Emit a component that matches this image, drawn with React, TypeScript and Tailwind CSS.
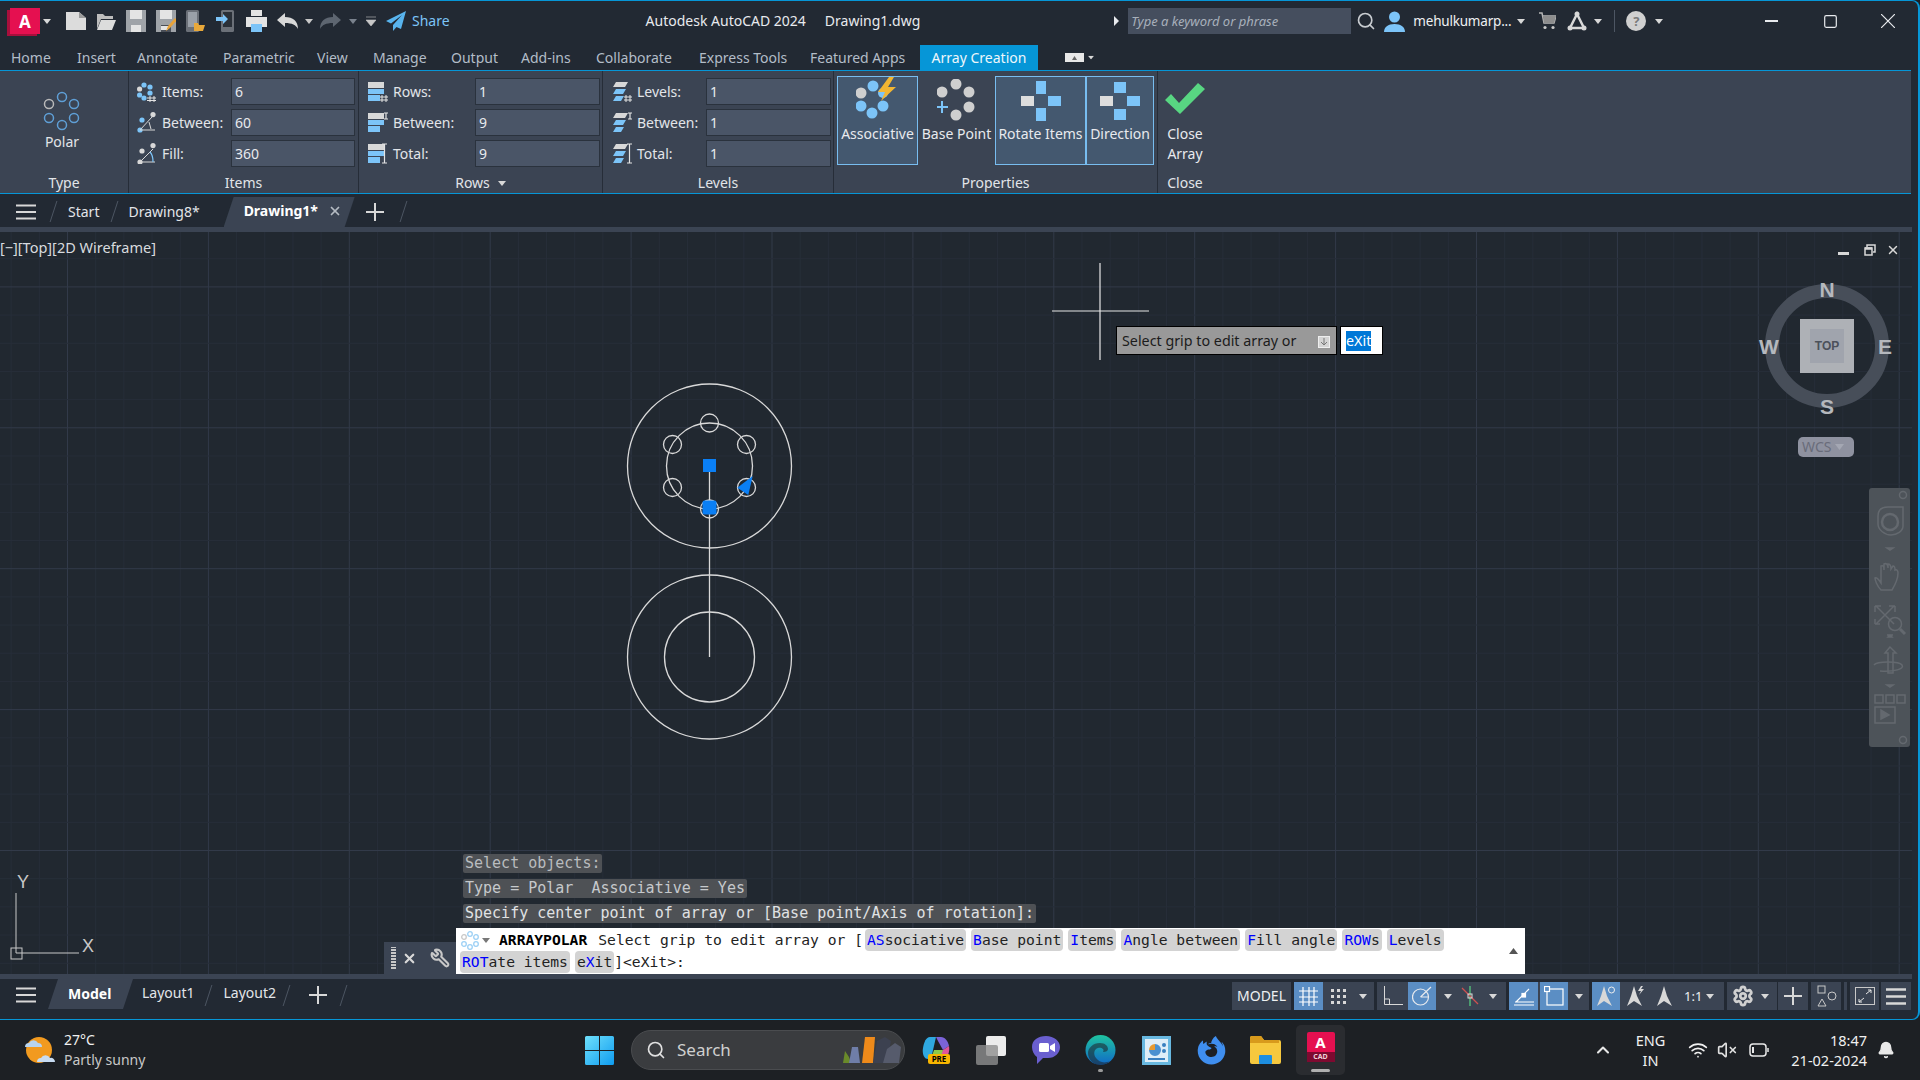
import React from "react";
import { Bell, ChevronUp, Search, Settings, VolumeX, Wifi, Wrench, X } from "lucide-react";
import { FaFirefoxBrowser } from "react-icons/fa";

// ---- small helpers ----

const Caret = ({ className = "" }: { className?: string }) => (
  <svg width="8" height="5" viewBox="0 0 8 5" className={className}>
    <path d="M0 0h8L4 5z" fill="currentColor" />
  </svg>
);

const Slash = ({ className = "" }: { className?: string }) => (
  <div className={`w-px h-[21px] bg-[#4d5663] skew-x-[-18deg] ${className}`} />
);

const Burger = () => (
  <svg width="20" height="16" viewBox="0 0 20 16" className="text-[#d8d8d8]">
    <path d="M0 1.500h20M0 8h20M0 14.500h20" stroke="currentColor" strokeWidth="2" />
  </svg>
);

const PlusIcon = ({ size = 18 }: { size?: number }) => (
  <svg width={size} height={size} viewBox="0 0 18 18">
    <path d="M9 0v18M0 9h18" stroke="#d8d8d8" strokeWidth="2" />
  </svg>
);

const BLUE = "#7cc4f8";
const GREY = "#d8d8d8";

// ---- quick access toolbar icons ----

const AppLogo = () => (
  <div className="relative w-[30px] h-[26px] bg-[#e51050] shadow-[-3px_2px_0_#a80f3c] flex items-center justify-center">
    <span className="text-white text-[17px] font-bold leading-none">A</span>
  </div>
);

const QatNew = () => (
  <svg width="20" height="20" viewBox="0 0 20 20"><path d="M0 1h13l7 6v12H0z" fill="#dcdcdc" /><path d="M13 1v6h7z" fill="#9a9a9a" /></svg>
);
const QatOpen = () => (
  <svg width="20" height="20" viewBox="0 0 20 20"><path d="M1 3h6l2 2h8v3H5L1 18z" fill="#bdbdbd" /><path d="M5 9h15l-4 10H1z" fill="#dcdcdc" /></svg>
);
const QatSave = ({ pen = false }: { pen?: boolean }) => (
  <svg width="20" height="24" viewBox="0 0 20 24">
    <path d="M0 1h20v22H0z" fill="#9fa3a8" />
    <path d="M4 1h12v9H4z" fill="#e4e4e4" />
    <path d="M5 16h10v7H5z" fill={pen ? "#4a4f58" : "#e4e4e4"} />
    {pen && <path d="M5 17h7v4H5z" fill="#e4e4e4" />}
    {pen && <path d="M10 22l2-5 7-8 2 2-7 8z" fill="#e8a33a" />}
  </svg>
);
const QatPhone = ({ arrow = false }: { arrow?: boolean }) => (
  <svg width="20" height="24" viewBox="0 0 20 24">
    <rect x={arrow ? 5 : 0} y="1" width="13" height="22" rx="1.500" fill="#6b7078" />
    <rect x={arrow ? 7 : 2} y="3" width="9" height="15" fill={arrow ? "#2a3038" : "#9aa0a8"} />
    {arrow ? <path d="M0 8h7V5l5 5-5 5v-3H0z" fill={BLUE} /> : <path d="M8 14h4l1 2h6l-2 6H8z" fill="#e8a83a" />}
  </svg>
);
const QatPrint = () => (
  <svg width="21" height="24" viewBox="0 0 21 24">
    <path d="M5 1h11v6H5z" fill="#e4e4e4" />
    <path d="M0 8h21v10H0z" fill="#e4e4e4" />
    <path d="M5 15h11v8H5z" fill="#7cc4f8" />
  </svg>
);
const QatUndo = ({ flip = false }: { flip?: boolean }) => (
  <svg width="21" height="16" viewBox="0 0 21 16" className={flip ? "-scale-x-100" : ""}>
    <path d="M0 7l8-7v4c8 0 13 4 13 12-2-4-6-6-13-6v4z" fill={flip ? "#5d6570" : "#d8d8d8"} />
  </svg>
);
const Plane = () => (
  <svg width="20" height="20" viewBox="0 0 20 20"><path d="M20 0L0 10l5 2.500L16 4 7 14v6l3.500-4 4.500 2z" fill="#58b4ee" /></svg>
);

// ---- ribbon icons ----

const ItemsIcon = () => (
  <svg width="20" height="20" viewBox="0 0 20 20">
    <circle cx="7" cy="3" r="2.600" fill={BLUE} /><circle cx="13" cy="5" r="2.600" fill={BLUE} /><circle cx="2.600" cy="7" r="2.600" fill={GREY} />
    <circle cx="2.600" cy="13" r="2.600" fill={BLUE} /><circle cx="7" cy="16" r="2.600" fill={BLUE} /><circle cx="13" cy="11" r="2.600" fill={BLUE} />
    <path d="M13 14v6M17 14v6M10 16h9M10 18.500h9" stroke="#e4e4e4" strokeWidth="1" />
  </svg>
);
const BetweenIcon = () => (
  <svg width="20" height="21" viewBox="0 0 20 21">
    <circle cx="3" cy="18" r="2.600" fill={BLUE} /><circle cx="16" cy="2.600" r="2.600" fill={GREY} /><circle cx="5" cy="8" r="2.600" fill={BLUE} />
    <path d="M3 18h15M3 18L15 5M12 10l2 7" stroke="#d8d8d8" strokeWidth="1" fill="none" />
  </svg>
);
const FillIcon = () => (
  <svg width="20" height="21" viewBox="0 0 20 21">
    <circle cx="3" cy="19" r="2.600" fill={GREY} /><circle cx="16" cy="2.600" r="2.600" fill={GREY} /><circle cx="5" cy="8" r="2.600" fill={GREY} />
    <path d="M3 19h15M3 19L16 6" stroke="#d8d8d8" strokeWidth="1" />
    <path d="M13 9c3 3 3 6 3 10" stroke={BLUE} strokeWidth="1.200" fill="none" />
  </svg>
);
const RowsIcon = ({ kind }: { kind: "count" | "between" | "total" }) => (
  <svg width="20" height="21" viewBox="0 0 20 21">
    <path d="M0 1h16v6H0z" fill={GREY} />
    <path d="M0 8h16v5H0z" fill={BLUE} />
    <path d="M0 14h12v6H0z" fill={BLUE} />
    {kind === "count" && <path d="M14 14v7M18 14v7M12 16h8M12 19h8" stroke="#e4e4e4" strokeWidth="1" />}
    {kind === "between" && <path d="M16 1h4M16 7h4M18 1v6" stroke="#e4e4e4" strokeWidth="1.200" />}
    {kind === "total" && <path d="M14 1h5M14 20h5M16.500 1v19" stroke="#e4e4e4" strokeWidth="1.200" />}
  </svg>
);
const LevelsIcon = ({ kind }: { kind: "count" | "between" | "total" }) => (
  <svg width="20" height="21" viewBox="0 0 20 21">
    <path d="M4 1h12l-3 5H1z" fill={GREY} />
    <path d="M4 8h10l-3 5H1z" fill={BLUE} />
    <path d="M4 15h8l-3 5H1z" fill={BLUE} />
    {kind === "count" && <path d="M14 14v7M18 14v7M12 16h8M12 19h8" stroke="#e4e4e4" strokeWidth="1" />}
    {kind === "between" && <path d="M16 1h4M16 7h4M18 1v6" stroke="#e4e4e4" strokeWidth="1.200" />}
    {kind === "total" && <path d="M15 1h5M15 20h5M17.500 1v19" stroke="#e4e4e4" strokeWidth="1.200" />}
  </svg>
);

const PolarIcon = () => (
  <svg width="38" height="40" viewBox="0 0 38 40" fill="none" strokeWidth="1.500">
    <circle cx="19" cy="6" r="4.500" stroke="#5f9fd6" />
    <circle cx="31" cy="13" r="4.500" stroke="#5f9fd6" />
    <circle cx="31" cy="27" r="4.500" stroke="#5f9fd6" />
    <circle cx="19" cy="34" r="4.500" stroke="#5f9fd6" />
    <circle cx="6" cy="27" r="4.500" stroke="#5f9fd6" />
    <circle cx="6" cy="13" r="4.500" stroke="#b9b9b9" />
  </svg>
);

const AssociativeIcon = () => (
  <svg width="44" height="44" viewBox="0 0 44 44">
    <circle cx="5" cy="16" r="5.500" fill="#cfcfcf" /><circle cx="17" cy="9" r="5.500" fill={BLUE} />
    <circle cx="27" cy="16" r="5" fill={BLUE} /><circle cx="5" cy="29" r="5.500" fill={BLUE} />
    <circle cx="16" cy="36" r="5.500" fill={BLUE} /><circle cx="27" cy="29" r="5.500" fill={BLUE} />
    <path d="M33 0L22 15h7l-4 9 15-14h-8l6-10z" fill="#f2b632" />
  </svg>
);
const BasePointIcon = () => (
  <svg width="40" height="42" viewBox="0 0 40 42">
    <circle cx="19" cy="5" r="5.500" fill="#cfcfcf" /><circle cx="5" cy="13" r="5.500" fill="#cfcfcf" />
    <circle cx="32" cy="13" r="5.500" fill="#cfcfcf" /><circle cx="32" cy="28" r="5.500" fill="#cfcfcf" />
    <circle cx="19" cy="36" r="5.500" fill="#cfcfcf" />
    <path d="M5 22v12M-1 28h12" stroke={BLUE} strokeWidth="2" />
  </svg>
);
const CrossSquares = ({ rotate }: { rotate: boolean }) => (
  <svg width="40" height="40" viewBox="0 0 40 40">
    {rotate ? <path d="M15 0h10v13H15z" fill={BLUE} /> : <path d="M14 1h12v11H14z" fill={BLUE} />}
    {rotate ? <path d="M15 27h10v13H15z" fill={BLUE} /> : <path d="M14 28h12v11H14z" fill={BLUE} />}
    <path d="M0 15h13v10H0z" fill="#dddddd" />
    <path d="M27 15h13v10H27z" fill={BLUE} />
  </svg>
);

// ---- ribbon pieces ----

const ParamRow = ({ icon, label, value, labelWidth, inputWidth }: { icon: React.ReactNode; label: string; value: string; labelWidth: string; inputWidth: string }) => (
  <div className="flex items-center h-[27px]">
    <div className="w-[25px]">{icon}</div>
    <span className={`${labelWidth} text-[#e2e5e9] whitespace-nowrap`}>{label}</span>
    <div className={`${inputWidth} h-[27px] bg-[#4a5567] border border-[#2a323d] pl-[3px] flex items-center text-[#e8eaee]`}>{value}</div>
  </div>
);

const PanelTitle = ({ children }: { children: React.ReactNode }) => (
  <div className="h-[22px] pt-[2px] flex items-center justify-center gap-2 text-[#e2e5e9]">{children}</div>
);

const PropButton = ({ label, icon, active, width, iconClass = "" }: { label: string; icon: React.ReactNode; active?: boolean; width: string; iconClass?: string }) => (
  <div className={`${width} h-[89px] flex flex-col items-center border ${active ? "border-[#78bdf0] bg-[#44586f]" : "border-transparent"}`}>
    <div className={`h-[44px] flex items-end justify-center ${iconClass}`}>{icon}</div>
    <span className="mt-[3px] whitespace-nowrap text-[#e8eaee]">{label}</span>
  </div>
);

const Ribbon = () => (
  <div className="flex h-[124px] w-[1911px] bg-[#3b4453] border-y border-[#0696d7]">
    {/* Type */}
    <div className="w-[129px] flex flex-col border-r border-[#262d38]">
      <div className="flex-1 flex flex-col items-center pt-[20px] pr-[4px]">
        <PolarIcon />
        <span className="mt-[1px] text-[#e2e5e9]">Polar</span>
      </div>
      <PanelTitle>Type</PanelTitle>
    </div>
    {/* Items */}
    <div className="w-[230px] flex flex-col border-r border-[#262d38]">
      <div className="flex-1 flex flex-col gap-[4px] pt-[7px] pl-[8px]">
        <ParamRow icon={<ItemsIcon />} label="Items:" value="6" labelWidth="w-[69px]" inputWidth="w-[124px]" />
        <ParamRow icon={<BetweenIcon />} label="Between:" value="60" labelWidth="w-[69px]" inputWidth="w-[124px]" />
        <ParamRow icon={<FillIcon />} label="Fill:" value="360" labelWidth="w-[69px]" inputWidth="w-[124px]" />
      </div>
      <PanelTitle>Items</PanelTitle>
    </div>
    {/* Rows */}
    <div className="w-[244px] flex flex-col border-r border-[#262d38]">
      <div className="flex-1 flex flex-col gap-[4px] pt-[7px] pl-[9px]">
        <ParamRow icon={<RowsIcon kind="count" />} label="Rows:" value="1" labelWidth="w-[82px]" inputWidth="w-[125px]" />
        <ParamRow icon={<RowsIcon kind="between" />} label="Between:" value="9" labelWidth="w-[82px]" inputWidth="w-[125px]" />
        <ParamRow icon={<RowsIcon kind="total" />} label="Total:" value="9" labelWidth="w-[82px]" inputWidth="w-[125px]" />
      </div>
      <PanelTitle>Rows <Caret className="text-[#d8d8d8]" /></PanelTitle>
    </div>
    {/* Levels */}
    <div className="w-[231px] flex flex-col border-r border-[#262d38]">
      <div className="flex-1 flex flex-col gap-[4px] pt-[7px] pl-[9px]">
        <ParamRow icon={<LevelsIcon kind="count" />} label="Levels:" value="1" labelWidth="w-[69px]" inputWidth="w-[125px]" />
        <ParamRow icon={<LevelsIcon kind="between" />} label="Between:" value="1" labelWidth="w-[69px]" inputWidth="w-[125px]" />
        <ParamRow icon={<LevelsIcon kind="total" />} label="Total:" value="1" labelWidth="w-[69px]" inputWidth="w-[125px]" />
      </div>
      <PanelTitle>Levels</PanelTitle>
    </div>
    {/* Properties */}
    <div className="w-[324px] flex flex-col border-r border-[#262d38]">
      <div className="flex-1 flex pt-[5px] pl-[3px]">
        <PropButton label="Associative" icon={<AssociativeIcon />} active width="w-[81px]" />
        <PropButton label="Base Point" icon={<BasePointIcon />} width="w-[77px]" />
        <PropButton label="Rotate Items" icon={<CrossSquares rotate />} active width="w-[91px]" />
        <PropButton label="Direction" icon={<CrossSquares rotate={false} />} active width="w-[68px]" />
      </div>
      <PanelTitle>Properties</PanelTitle>
    </div>
    {/* Close */}
    <div className="w-[54px] flex flex-col">
      <div className="flex-1 flex flex-col items-center pt-[12px] leading-[20px] text-[#e8eaee]">
        <svg width="40" height="31" viewBox="0 0 40 31"><path d="M0 17l6-6 8 9L33 0l7 6-25 25z" fill="#58d682" /></svg>
        <span className="mt-[10px]">Close</span>
        <span>Array</span>
      </div>
      <PanelTitle>Close</PanelTitle>
    </div>
  </div>
);

// ---- title bar ----

const TitleBar = () => (
  <div className="h-[44px] flex items-center pb-[4px] pl-[10px] text-[#e8eaee]">
    <AppLogo />
    <Caret className="ml-[3px] text-[#d8d8d8]" />
    <div className="ml-[15px] flex items-center gap-[10px]">
      <QatNew /><QatOpen /><QatSave /><QatSave pen /><QatPhone /><QatPhone arrow /><QatPrint /><QatUndo />
    </div>
    <Caret className="ml-[7px] text-[#c8c8c8]" />
    <div className="ml-[7px]"><QatUndo flip /></div>
    <Caret className="ml-[8px] text-[#7a828d]" />
    <svg width="10" height="10" viewBox="0 0 10 10" className="ml-[9px] text-[#c8c8c8]"><path d="M0 1h10M0 4h10L5 10z" fill="currentColor" stroke="currentColor" strokeWidth=".6" /></svg>
    <div className="ml-[10px]"><Plane /></div>
    <span className="ml-[6px] text-[#7cc4f8]">Share</span>
    <span className="ml-[196px] whitespace-nowrap">Autodesk AutoCAD 2024</span>
    <span className="ml-[19px] whitespace-nowrap">Drawing1.dwg</span>
    <svg width="5" height="10" viewBox="0 0 5 10" className="ml-[194px]"><path d="M0 0l5 5-5 5z" fill="#e8eaee" /></svg>
    <div className="ml-[9px] w-[223px] h-[26px] bg-[#454e5e] pl-[3px] flex items-center italic text-[#a8b0bb] text-[13px]">Type a keyword or phrase</div>
    <Search size={20} className="ml-[5px] text-[#c8ccd0]" />
    <svg width="21" height="21" viewBox="0 0 21 21" className="ml-[8px]">
      <circle cx="10.500" cy="6" r="5.500" fill={BLUE} />
      <path d="M0 21c0-5 4-8 10.500-8S21 16 21 21z" fill={BLUE} />
    </svg>
    <span className="ml-[8px] w-[101px] whitespace-nowrap text-[13.5px] tracking-[-0.2px] text-[#eef0f2]">mehulkumarp...</span>
    <Caret className="ml-[3px] text-[#d8d8d8]" />
    <svg width="17" height="18" viewBox="0 0 17 18" className="ml-[14px]"><path d="M0 1h3l2 10h10l2-7H4" fill="none" stroke="#b5b5b5" strokeWidth="1.500" /><path d="M4 4h13l-2 7H5z" fill="#8d8d8d" /><circle cx="6" cy="15.500" r="1.600" fill="#c8c8c8" /><circle cx="14" cy="15.500" r="1.600" fill="#c8c8c8" /></svg>
    <svg width="20" height="20" viewBox="0 0 20 20" className="ml-[11px]"><path d="M10 3L3 17h14z" fill="none" stroke="#d8d8d8" strokeWidth="2.500" /><circle cx="10" cy="3" r="2.500" fill="#d8d8d8" /><circle cx="3" cy="17" r="2.500" fill="#d8d8d8" /><circle cx="17" cy="17" r="2.500" fill="#d8d8d8" /></svg>
    <Caret className="ml-[7px] text-[#d8d8d8]" />
    <div className="ml-[12px] w-px h-[22px] bg-[#4d5663]" />
    <div className="ml-[11px] w-[20px] h-[20px] rounded-full bg-[#d0d0d0] flex items-center justify-center text-[#7a7a7a] text-[13px] font-bold">?</div>
    <Caret className="ml-[9px] text-[#d8d8d8]" />
    <svg width="13" height="2" viewBox="0 0 13 2" className="ml-[102px]"><path d="M0 1h13" stroke="#e8eaee" strokeWidth="2" /></svg>
    <svg width="13" height="13" viewBox="0 0 13 13" className="ml-[46px]"><rect x=".7" y=".7" width="11.600" height="11.600" rx="1.500" fill="none" stroke="#e8eaee" strokeWidth="1.200" /></svg>
    <svg width="14" height="14" viewBox="0 0 14 14" className="ml-[44px]"><path d="M0 0l14 14M14 0L0 14" stroke="#e8eaee" strokeWidth="1.200" /></svg>
  </div>
);

const tabs = [
  { label: "Home", width: "w-[66px]" },
  { label: "Insert", width: "w-[60px]" },
  { label: "Annotate", width: "w-[86px]" },
  { label: "Parametric", width: "w-[94px]" },
  { label: "View", width: "w-[56px]" },
  { label: "Manage", width: "w-[78px]" },
  { label: "Output", width: "w-[70px]" },
  { label: "Add-ins", width: "w-[75px]" },
  { label: "Collaborate", width: "w-[103px]" },
  { label: "Express Tools", width: "w-[111px]" },
  { label: "Featured Apps", width: "w-[110px]" },
];

const RibbonTabs = () => (
  <div className="h-[25px] flex items-center pl-[11px] text-[#b3bdc8]">
    {tabs.map((t) => (
      <div key={t.label} className={`${t.width} whitespace-nowrap`}>{t.label}</div>
    ))}
    <div className="w-[118px] h-[25px] bg-[#0696d7] text-[#eef6fb] flex items-center justify-center whitespace-nowrap">Array Creation</div>
    <div className="ml-[27px] w-[19px] h-[9px] bg-[#e8e8e8] flex items-center justify-center">
      <svg width="5" height="4" viewBox="0 0 5 4"><path d="M0 4l2.500-4L5 4z" fill="#666" /></svg>
    </div>
    <Caret className="ml-[3px] text-[#d8d8d8] scale-75" />
  </div>
);

// ---- document tabs ----

const DocTabs = () => (
  <div className="h-[33px] flex items-center pl-[16px] pt-[2px] text-[#e2e5e9]">
    <Burger />
    <Slash className="ml-[17px]" />
    <span className="ml-[14px]">Start</span>
    <Slash className="ml-[15px]" />
    <span className="ml-[13px]">Drawing8*</span>
    <div className="ml-[24px] mt-[1px] w-[131px] h-[30px] bg-[#3b4453] [clip-path:polygon(10px_0,100%_0,calc(100%-10px)_100%,0_100%)] flex items-center pl-[20px] pb-[2px] text-white font-bold">
      Drawing1*
      <X size={14} strokeWidth={3} className="ml-[10px] text-[#b5bbc3]" />
    </div>
    <div className="ml-[11px]"><PlusIcon /></div>
    <Slash className="ml-[19px]" />
  </div>
);

// ---- model space ----

const gridLines = (start: number, end: number, first: number) => {
  const lines: { at: number; major: boolean }[] = [];
  const step = 140.9 / 5;
  for (let i = 0; first + i * step < end; i++) {
    const at = first + i * step;
    if (at >= start) lines.push({ at, major: i % 5 === 0 });
  }
  return lines;
};

const ModelSpace = () => (
  <svg className="absolute inset-0 w-[1912px] h-[742px]" viewBox="0 232 1912 742">
    {gridLines(0, 1912, -73.4).map((l) => (
      <line key={`v${l.at}`} x1={l.at} x2={l.at} y1="232" y2="974" stroke={l.major ? "#323a49" : "#272e39"} />
    ))}
    {gridLines(232, 974, 146).map((l) => (
      <line key={`h${l.at}`} y1={l.at} y2={l.at} x1="0" x2="1912" stroke={l.major ? "#323a49" : "#272e39"} />
    ))}

    <g fill="none" stroke="#d9d9d9" strokeWidth="1.300">
      <circle cx="709.500" cy="466" r="82" />
      <circle cx="709.500" cy="466" r="43" />
      <circle cx="709.500" cy="423" r="9" />
      <circle cx="746.500" cy="444.500" r="9" />
      <circle cx="746.500" cy="487.500" r="9" />
      <circle cx="709.500" cy="509" r="9" />
      <circle cx="672.500" cy="487.500" r="9" />
      <circle cx="672.500" cy="444.500" r="9" />
      <circle cx="709.500" cy="657" r="82" />
      <circle cx="709.500" cy="657" r="45" />
      <path d="M709.500 466V657" />
    </g>
    <rect x="703" y="459" width="13" height="13" fill="#0a7ff5" />
    <rect x="702.500" y="500.500" width="14" height="14" rx="2" fill="#0a7ff5" />
    <path d="M752.700 476L737.300 487.700 748.300 495z" fill="#0a7ff5" />

    {/* crosshair */}
    <path d="M1100 263V360M1052 311H1149" stroke="#e6e6e6" strokeWidth="1.200" />

    {/* UCS */}
    <path d="M16 893V953H79" stroke="#c8c8c8" strokeWidth="1" fill="none" />
    <rect x="11" y="948" width="11" height="11" fill="none" stroke="#c8c8c8" />
    <text x="17" y="888" fontFamily="Liberation Sans, sans-serif" fontSize="18" fill="#c8c8c8">Y</text>
    <text x="82" y="952" fontFamily="Liberation Sans, sans-serif" fontSize="18" fill="#c8c8c8">X</text>

    {/* view cube */}
    <circle cx="1827" cy="346" r="55" fill="none" stroke="#474e59" strokeWidth="14" />
    <rect x="1800" y="319" width="54" height="54" fill="#aeb1b6" />
    <rect x="1810" y="329" width="34" height="34" fill="#a0a4ad" />
    <g fontFamily="Liberation Sans, sans-serif" fontWeight="700" textAnchor="middle" fill="#b5b8bd" fontSize="21">
      <text x="1827" y="297">N</text>
      <text x="1827" y="414">S</text>
      <text x="1769" y="354">W</text>
      <text x="1885" y="354">E</text>
    </g>
    <text x="1827" y="350" fontFamily="Liberation Sans, sans-serif" fontWeight="700" textAnchor="middle" fill="#4c515b" fontSize="12">TOP</text>
  </svg>
);

const NavBar = () => (
  <div className="absolute left-[1869px] top-[256px] w-[41px] h-[259px] rounded-[3px] bg-[#4d5359]">
    <svg width="41" height="259" viewBox="0 0 41 259" fill="none" stroke="#64696f" strokeWidth="1.500">
      <circle cx="34" cy="7" r="3.500" />
      <path d="M9 28c0-7 5-9 10-9h15v19c0 5-6 9-12 9S9 42 9 36z" />
      <circle cx="21" cy="34" r="8" strokeWidth="2.500" />
      <path d="M18 60h6l-3 2z" fill="#64696f" />
      <path d="M12 102c-4-4-6-10-6-12 2-1 4 2 6 5V78c2-1 3 0 3 4V76c2-1 4 0 4 4V76c2 0 3 1 3 5l2-3c2 0 2 2 2 4 2-1 3 1 3 3 0 6-3 12-6 17z" />
      <path d="M7 118l18 18M25 118L7 136M6 118h6M6 118v6M26 118h-6M26 118v6M6 136h5M6 136v-5" />
      <circle cx="26" cy="136" r="6.500" />
      <path d="M31 141l5 5" strokeWidth="3" />
      <path d="M18 147h6M21 147l-2 2h4z" />
      <path d="M21 159l-5 6h3v20h5v-20h3z" />
      <path d="M5 177c3-4 25-4 28 0s-8 7-22 6" />
      <path d="M18 197h6l-3 2z" fill="#64696f" />
      <rect x="6" y="207" width="8" height="8" />
      <rect x="17" y="207" width="8" height="8" />
      <rect x="28" y="207" width="8" height="8" />
      <rect x="6" y="219" width="20" height="16" />
      <path d="M12 222v9l8-4z" fill="#64696f" />
      <circle cx="34" cy="252" r="3.500" />
    </svg>
  </div>
);

// ---- command line ----

const Key = ({ k, rest, className = "" }: { k: string; rest?: string; className?: string }) => (
  <span className={`bg-[#d3d3d3] rounded-[4px] px-[2px] h-[22px] leading-[22px] ${className}`}>
    <span className="text-[#0000ff]">{k}</span>{rest}
  </span>
);

const CommandHistory = () => (
  <div className="absolute left-[463px] top-[622px] flex flex-col items-start gap-[6px] font-['DejaVu_Sans_Mono',monospace] text-[15px] whitespace-pre">
    <div className="h-[19px] leading-[19px] px-[2px] rounded-[2px] bg-[#4e5155] text-[#b9bcbf]">Select objects:</div>
    <div className="h-[19px] leading-[19px] px-[2px] rounded-[2px] bg-[#4e5155] text-[#c6c9cc]">Type = Polar  Associative = Yes</div>
    <div className="h-[19px] leading-[19px] px-[2px] rounded-[2px] bg-[#4e5155] text-[#e0e2e4]">Specify center point of array or [Base point/Axis of rotation]:</div>
  </div>
);

const CommandLine = () => (
  <div className="absolute left-[384px] bottom-0 w-[1141px] flex items-end">
    <div className="w-[72px] h-[32px] bg-[#3b4453] flex items-center pl-[7px]">
      <div className="w-[5px] h-[22px] bg-[repeating-linear-gradient(0deg,#c8c8c8_0,#c8c8c8_2px,transparent_2px,transparent_3px)]" />
      <X size={15} strokeWidth={3.500} className="ml-[6px] text-[#d8d8d8]" />
      <Wrench size={20} strokeWidth={2.500} className="ml-[13px] text-[#c8c8c8] -scale-x-100" />
    </div>
    <div className="relative flex-1 h-[46px] bg-white pl-[4px] pt-[1px] font-['DejaVu_Sans_Mono',monospace] text-[14.67px] text-[#222] whitespace-pre">
      <div className="flex items-center h-[22px]">
        <svg width="19" height="19" viewBox="0 0 19 19" fill="none" stroke="#9cd0f5" strokeWidth="1.300">
          <circle cx="10" cy="3" r="2.300" /><circle cx="16" cy="6" r="2.300" /><circle cx="16" cy="13" r="2.300" />
          <circle cx="10" cy="16" r="2.300" /><circle cx="4" cy="13" r="2.300" /><circle cx="4" cy="6" r="2.300" stroke="#c8c8c8" />
        </svg>
        <Caret className="ml-[3px] text-[#777]" />
        <span className="ml-[9px] font-bold text-black">ARRAYPOLAR</span>
        <span className="ml-[11px]">Select grip to edit array or [</span>
        <Key k="AS" rest="sociative" className="ml-[2px] mr-[1px]" />
        <Key k="B" rest="ase point" className="ml-[4px]" />
        <Key k="I" rest="tems" className="ml-[5px]" />
        <Key k="A" rest="ngle between" className="ml-[5px]" />
        <Key k="F" rest="ill angle" className="ml-[5px]" />
        <Key k="ROW" rest="s" className="ml-[5px]" />
        <Key k="L" rest="evels" className="ml-[5px]" />
      </div>
      <div className="flex items-center h-[22px]">
        <Key k="ROT" rest="ate items" />
        <span className="ml-[5px] bg-[#d3d3d3] rounded-[4px] px-[2px] h-[22px] leading-[22px]">e<span className="text-[#0000ff]">X</span>it</span>
        <span>]&lt;eXit&gt;:</span>
      </div>
      <svg width="9" height="6" viewBox="0 0 9 6" className="absolute right-[7px] top-[20px]"><path d="M0 6l4.500-6L9 6z" fill="#555" /></svg>
    </div>
  </div>
);

const DynamicPrompt = () => (
  <div className="absolute left-[1116px] top-[94px] flex gap-[3px] text-[14.3px] h-[29px]">
    <div className="w-[221px] border border-black bg-[#999999] flex items-center pl-[5px] text-[#1c1c1c] relative">
      Select grip to edit array or
      <div className="absolute right-[6px] top-[9px] w-[12px] h-[12px] bg-[#d4d4d4] border border-[#eee] flex items-center justify-center">
        <svg width="8" height="8" viewBox="0 0 8 8"><path d="M4 0v7M1 4l3 3 3-3" fill="none" stroke="#777" /></svg>
      </div>
    </div>
    <div className="w-[43px] border border-black bg-white flex items-center pl-[5px]">
      <span className="bg-[#0078d7] text-white leading-[20px]">eXit</span>
    </div>
  </div>
);

const Viewport = () => (
  <div className="relative flex-1 w-[1912px] bg-[#212830] overflow-hidden">
    <ModelSpace />
    <div className="absolute left-0 top-[5px] text-[#d8dbdf] text-[14.5px]">[−][Top][2D Wireframe]</div>
    <div className="absolute left-[1798px] top-[205px] w-[56px] h-[20px] rounded-[5px] bg-[#8f92a0] flex items-center pl-[4px] gap-[4px] text-[#696c7a] text-[14px]">
      WCS
      <svg width="9" height="6" viewBox="0 0 9 6"><path d="M0 0h9L4.500 6z" fill="#a4a7b3" /></svg>
    </div>
    <div className="absolute left-[1838px] top-[11px] flex items-center">
      <div className="w-[11px] h-[3px] mt-[7px] bg-[#d8d8d8]" />
      <svg width="12" height="12" viewBox="0 0 12 12" fill="none" stroke="#d8d8d8" strokeWidth="1.500" className="ml-[15px]"><path d="M3 3V1h8v7H9" /><path d="M1 4h7v7H1z" fill="#212830" /><path d="M1 4.500h7" strokeWidth="2.500" /></svg>
      <X size={14} strokeWidth={2.500} className="ml-[10px] text-[#d8d8d8]" />
    </div>
    <NavBar />
    <DynamicPrompt />
    <CommandHistory />
    <CommandLine />
  </div>
);

// ---- status bar ----

const Cell = ({ active, width, children }: { active?: boolean; width: string; children: React.ReactNode }) => (
  <div className={`${width} h-[28px] flex items-center justify-center ${active ? "bg-[#5b8ec4]" : ""}`}>{children}</div>
);

const WarpIcon = ({ extra }: { extra?: "bolt" | "dot" }) => (
  <svg width="20" height="22" viewBox="0 0 20 22">
    <path d="M8 1l3 10 5 10-8-5-7 5 4-10z" fill="#d8d8d8" />
    {extra === "dot" && <circle cx="15.500" cy="5" r="3" fill="none" stroke="#eee" />}
    {extra === "bolt" && <path d="M15 1l-3 5h3l-2 4 5-6h-3l2-3z" fill="#d8d8d8" />}
  </svg>
);

const StatusBar = () => (
  <div className="flex items-center gap-[3px] text-[#eef0f2]">
    <div className="w-[59px] h-[28px] bg-[#3b4453] flex items-center justify-center">MODEL</div>
    <div className="w-[80px] h-[28px] bg-[#3b4453] flex items-center">
      <Cell active width="w-[29px]">
        <svg width="19" height="19" viewBox="0 0 19 19"><path d="M4 0v19M10 0v19M15 0v19M0 4h19M0 10h19M0 15h19" stroke="#fff" strokeWidth="1.200" /></svg>
      </Cell>
      <Cell width="w-[31px]">
        <svg width="15" height="15" viewBox="0 0 15 15" fill="#d8d8d8"><path d="M0 0h3v3H0zM6 0h3v3H6zM12 0h3v3h-3zM0 6h3v3H0zM6 6h3v3H6zM12 6h3v3h-3zM0 12h3v3H0zM6 12h3v3H6zM12 12h3v3h-3z" /></svg>
      </Cell>
      <Caret className="ml-[5px] text-[#d8d8d8]" />
    </div>
    <div className="w-[129px] h-[28px] bg-[#3b4453] flex items-center">
      <Cell width="w-[31px]">
        <svg width="20" height="20" viewBox="0 0 20 20" fill="none" stroke="#d8d8d8"><path d="M1.500 0v18.500H20" /><path d="M1.500 13h5v5.500" /></svg>
      </Cell>
      <Cell active width="w-[28px]">
        <svg width="20" height="20" viewBox="0 0 20 20" fill="none" stroke="#e8eaee" strokeWidth="1.200"><circle cx="8.500" cy="11" r="8" /><path d="M8.500 11L19 1M8.500 11H17" /></svg>
      </Cell>
      <Caret className="ml-[8px] text-[#d8d8d8]" />
      <div className="ml-[9px]">
        <svg width="18" height="20" viewBox="0 0 18 20"><path d="M9 0v20" stroke="#58d682" strokeWidth="1.200" /><path d="M1 2l16 16" stroke="#d05050" strokeWidth="1.200" /><rect x="7" y="8" width="4" height="4" fill="none" stroke="#ddd" /></svg>
      </div>
      <Caret className="ml-[10px] text-[#d8d8d8]" />
    </div>
    <div className="w-[80px] h-[28px] bg-[#3b4453] flex items-center">
      <Cell active width="w-[29px]">
        <svg width="20" height="20" viewBox="0 0 20 20" fill="none" stroke="#fff" strokeWidth="1.200"><path d="M0 19h20M1 16h19M2 16L15 3" /><rect x="8" y="7.500" width="3.500" height="3.500" fill="#fff" /></svg>
      </Cell>
      <div className="w-[2px]" />
      <Cell active width="w-[28px]">
        <svg width="20" height="20" viewBox="0 0 20 20" fill="none" stroke="#fff" strokeWidth="1.200"><rect x="3" y="3" width="16" height="16" /><rect x="0.500" y="0.500" width="5" height="5" fill="#5b8ec4" /></svg>
      </Cell>
      <Caret className="ml-[7px] text-[#d8d8d8]" />
    </div>
    <div className="w-[132px] h-[28px] bg-[#3b4453] flex items-center">
      <Cell active width="w-[28px]"><WarpIcon extra="dot" /></Cell>
      <Cell width="w-[31px]"><WarpIcon extra="bolt" /></Cell>
      <Cell width="w-[29px]"><WarpIcon /></Cell>
      <span className="ml-[4px] text-[13px]">1:1</span>
      <Caret className="ml-[4px] text-[#d8d8d8]" />
    </div>
    <div className="w-[50px] h-[28px] bg-[#3b4453] flex items-center pl-[5px]">
      <Settings size={22} strokeWidth={3} className="text-[#d0d0d0]" />
      <Caret className="ml-[7px] text-[#d8d8d8]" />
    </div>
    <div className="w-[30px] h-[28px] bg-[#3b4453] flex items-center justify-center ml-[-2px]"><PlusIcon size={18} /></div>
    <div className="w-[30px] h-[28px] bg-[#3b4453] flex items-center justify-center">
      <svg width="22" height="22" viewBox="0 0 22 22" fill="none" stroke="#c8c8c8"><rect x="3" y="1" width="7" height="7" /><circle cx="17" cy="11" r="4" /><path d="M7 14l4 7H3z" /></svg>
    </div>
    <div className="w-[3px] h-[28px] bg-[#3b4453]" />
    <div className="w-[29px] h-[28px] bg-[#3b4453] flex items-center justify-center">
      <svg width="20" height="18" viewBox="0 0 20 18" fill="none" stroke="#c8c8c8"><rect x=".5" y=".5" width="19" height="17" /><path d="M11 7l5-4M16 3h-3M16 3v3M9 11l-5 4M4 15h3M4 15v-3" stroke="#e8e8e8" /></svg>
    </div>
    <div className="w-[30px] h-[28px] bg-[#3b4453] flex items-center justify-center ml-[-1px]">
      <svg width="20" height="17" viewBox="0 0 20 17"><path d="M0 1.500h20M0 8.500h20M0 15.500h20" stroke="#d8d8d8" strokeWidth="2.500" /></svg>
    </div>
  </div>
);

const LayoutBar = () => (
  <div className="h-[40px] flex items-start pl-[16px] text-[#e2e5e9]">
    <div className="mt-[8px]"><Burger /></div>
    <div className="ml-[12px] w-[85px] h-[30px] bg-[#3b4453] [clip-path:polygon(10px_0,100%_0,calc(100%-10px)_100%,0_100%)] flex items-center pl-[20px] text-white font-bold">Model</div>
    <span className="ml-[9px] mt-[4px]">Layout1</span>
    <Slash className="ml-[13px] mt-[6px]" />
    <span className="ml-[15px] mt-[4px]">Layout2</span>
    <Slash className="ml-[10px] mt-[6px]" />
    <div className="ml-[22px] mt-[7px]"><PlusIcon /></div>
    <Slash className="ml-[16px] mt-[6px]" />
    <div className="ml-auto mr-[7px] mt-[3px]"><StatusBar /></div>
  </div>
);

// ---- taskbar ----

const TaskbarWeather = () => (
  <div className="w-[585px] flex items-center pl-[24px]">
    <svg width="32" height="28" viewBox="0 0 32 28">
      <circle cx="15" cy="14" r="13" fill="#f29a1f" />
      <path d="M1 11a4 4 0 014-4 5 5 0 019 0 4 4 0 014 4z" fill="#b8d4ef" />
      <path d="M13 26a4 4 0 014-4 5 5 0 019 0 4 4 0 015 4z" fill="#c8dcf2" />
    </svg>
    <div className="ml-[8px] flex flex-col text-[14px] leading-[20px]">
      <span className="text-[#f0f0f0]">27°C</span>
      <span className="text-[#c8c8c8]">Partly sunny</span>
    </div>
  </div>
);

const CadIcon = () => (
  <div className="relative w-[28px] h-[30px] bg-[#e51050] rounded-[2px] flex flex-col items-center">
    <span className="text-white text-[15px] font-bold leading-[20px]">A</span>
    <div className="absolute bottom-0 left-0 right-0 h-[10px] bg-[#7d0a30] text-[7px] leading-[10px] text-center text-[#f0d0d8] font-bold">CAD</div>
  </div>
);

const Taskbar = () => (
  <div className="h-[60px] flex items-center bg-[#1d2024] text-white">
    <TaskbarWeather />
    <svg width="29" height="29" viewBox="0 0 29 29">
      <defs><linearGradient id="winlogo" x1="0" y1="0" x2="1" y2="1"><stop offset="0" stopColor="#6fe0fb" /><stop offset="1" stopColor="#0f9cf0" /></linearGradient></defs>
      <path d="M0 1.500A1.500 1.500 0 011.500 0H14v14H0zM15 0h12.500A1.500 1.500 0 0129 1.500V14H15zM0 15h14v14H1.500A1.500 1.500 0 010 27.500zM15 15h14v12.500a1.500 1.500 0 01-1.500 1.500H15z" fill="url(#winlogo)" />
    </svg>
    <div className="ml-[17px] w-[274px] h-[40px] rounded-full bg-[#3a3c3f] border border-[#4a4c4f] flex items-center pl-[14px] text-[#d0d0d0] text-[17px]">
      <Search size={20} className="text-[#e0e0e0]" />
      <span className="ml-[11px]">Search</span>
      <svg width="62" height="34" viewBox="0 0 62 34" className="ml-auto mr-[3px]">
        <path d="M4 30l2-12 4 6 2 6z" fill="#6a8a2a" />
        <path d="M10 30l3-16h6l2 16z" fill="#6f7ea8" />
        <path d="M23 30l3-26h10l-2 26z" fill="#ee8a1a" />
        <path d="M34 30l4-22 8-4 6 4-4 22z" fill="#3c4150" />
        <path d="M44 30l4-14 8-6 6 4-2 16z" fill="#565b6c" />
      </svg>
    </div>
    <div className="ml-[17px] w-[28px] h-[28px] relative">
      <svg width="28" height="24" viewBox="0 0 28 24">
        <path d="M8 1h6L9 23H6C2 23 0 18 1 12 2 6 4 1 8 1z" fill="#2fa8e0" />
        <path d="M14 1h5c4 0 7 4 8 9l-6 4-5-9z" fill="#7b63d8" />
        <path d="M21 14l6-4c1 6-1 13-8 13h-4z" fill="#e0569a" />
        <path d="M9 23l3-9h9l-3 9z" fill="#8cc84a" />
      </svg>
      <div className="absolute left-[6px] bottom-0 w-[22px] h-[10px] bg-[#f7b500] rounded-[2px] text-[8px] leading-[10px] text-center text-black font-bold">PRE</div>
    </div>
    <div className="ml-[26px] w-[30px] h-[29px] relative">
      <div className="absolute right-0 top-0 w-[20px] h-[20px] bg-[#ececec] rounded-[2px]" />
      <div className="absolute left-0 bottom-0 w-[22px] h-[20px] bg-[#8f8f8f]/80 rounded-[2px]" />
    </div>
    <svg width="28" height="30" viewBox="0 0 28 30" className="ml-[26px]">
      <path d="M14 1c8 0 14 5 14 11s-5 11-12 11h-5l-6 6v-7C2 20 0 16 0 12 0 5 6 1 14 1z" fill="#6a5fd0" />
      <rect x="7" y="8" width="10" height="9" rx="1.500" fill="#fff" />
      <path d="M18 11l5-3v9l-5-3z" fill="#fff" />
    </svg>
    <div className="ml-[25px] relative w-[31px] h-[30px]">
      <svg width="31" height="30" viewBox="0 0 31 30">
        <defs><linearGradient id="edge" x1="0" y1="0" x2="0" y2="1"><stop offset="0" stopColor="#1fc4a0" /><stop offset="1" stopColor="#1068c8" /></linearGradient></defs>
        <circle cx="15.500" cy="15" r="15" fill="url(#edge)" />
        <path d="M15 8c5 0 8 3 8 6 0 2-2 3-5 3 2-3-2-5-5-4-4 1-5 6-2 10 3 4 8 6 14 3-3 3-7 4-10 4-7 0-12-6-12-12 0-5 5-10 12-10z" fill="#1d2024" opacity=".55" />
      </svg>
      <div className="absolute left-[13px] top-[34px] w-[5px] h-[3px] rounded-full bg-[#9a9a9a]" />
    </div>
    <svg width="29" height="29" viewBox="0 0 29 29" className="ml-[26px]">
      <rect width="29" height="29" fill="#68b8e0" />
      <rect x="3" y="3" width="23" height="23" fill="#dfeef8" />
      <path d="M7 14a6 6 0 016-6v6z" fill="#e89a30" />
      <path d="M13 8a6 6 0 110 12 6 6 0 01-6-6h6z" fill="#4a90d0" />
      <circle cx="22" cy="9" r="2" fill="#3a80c0" /><circle cx="22" cy="15" r="2" fill="#3a80c0" />
      <path d="M6 23h17" stroke="#3a80c0" strokeWidth="2" />
    </svg>
    <FaFirefoxBrowser size={29} className="ml-[26px] text-[#3f8eef]" />
    <svg width="31" height="28" viewBox="0 0 31 28" className="ml-[24px]">
      <path d="M0 2a2 2 0 012-2h9l3 4h15a2 2 0 012 2v20a2 2 0 01-2 2H2a2 2 0 01-2-2z" fill="#f6c83e" />
      <path d="M0 2a2 2 0 012-2h9l3 4h15v3H0z" fill="#d89a1c" />
      <rect x="9" y="19" width="13" height="9" rx="1" fill="#1d8ee0" />
    </svg>
    <div className="ml-[15px] relative w-[49px] h-[50px] bg-[#2a2c30] rounded-[5px] flex justify-center pt-[7px]">
      <CadIcon />
      <div className="absolute left-[15px] bottom-[3px] w-[19px] h-[3px] rounded-full bg-[#b0b0b0]" />
    </div>
    <ChevronUp size={20} strokeWidth={2.500} className="ml-[248px] text-[#e8e8e8]" />
    <div className="ml-[23px] w-[29px] flex flex-col items-center text-[14.5px] leading-[20px] text-[#f0f0f0]">
      <span>ENG</span>
      <span>IN</span>
    </div>
    <Wifi size={20} className="ml-[23px] text-[#f0f0f0]" />
    <VolumeX size={20} className="ml-[9px] text-[#e0e0e0]" />
    <svg width="20" height="14" viewBox="0 0 20 14" className="ml-[12px]" fill="none" stroke="#e8e8e8" strokeWidth="1.500"><rect x="1" y="1" width="16" height="12" rx="3" /><path d="M19 5v4" /><path d="M4 4v6" strokeWidth="2" /></svg>
    <div className="ml-[10px] w-[88px] flex flex-col items-end text-[14.5px] leading-[20px] text-[#f0f0f0]">
      <span>18:47</span>
      <span className="whitespace-nowrap">21-02-2024</span>
    </div>
    <Bell size={18} fill="#e8e8e8" className="ml-[10px] text-[#e8e8e8]" />
  </div>
);

export default function App() {
  return (
    <div className="w-[1920px] h-[1080px] overflow-hidden flex flex-col bg-[#1d2024] text-[14px] leading-[20px] font-['Noto_Sans',sans-serif]">
      <div className="h-[1020px] flex flex-col bg-[#222933] border-t border-r-2 border-b border-[#0696d7] rounded-r-[8px] overflow-hidden">
        <TitleBar />
        <RibbonTabs />
        <Ribbon />
        <DocTabs />
        <div className="h-[5px] w-[1912px] bg-[#3b4453]" />
        <Viewport />
        <div className="h-[5px] w-[1912px] bg-[#3b4453]" />
        <LayoutBar />
      </div>
      <Taskbar />
    </div>
  );
}
